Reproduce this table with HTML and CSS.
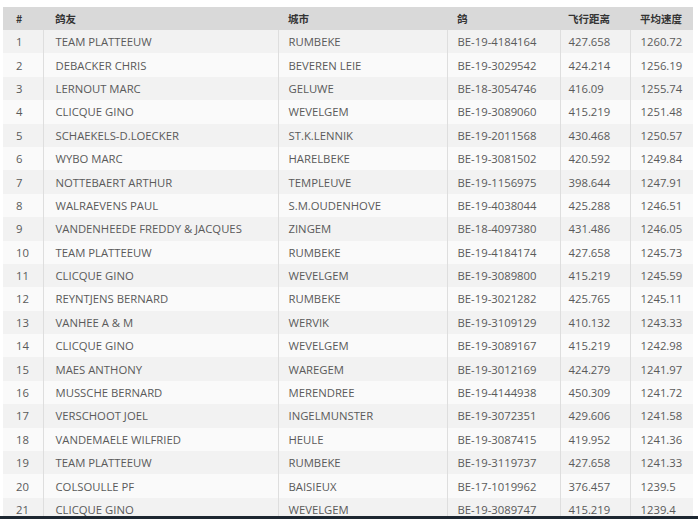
FILE: index.html
```html
<!DOCTYPE html>
<html>
<head>
<meta charset="utf-8">
<link rel="stylesheet" href="styles.css">
</head>
<body>
<div class="wrap">
<table class="rank">
<colgroup>
<col class="c-no"><col class="c-name"><col class="c-city"><col class="c-ring"><col class="c-dist"><col class="c-speed">
</colgroup>
<thead>
<tr><th>#</th><th>鸽友</th><th>城市</th><th>鸽</th><th>飞行距离</th><th>平均速度</th></tr>
</thead>
<tbody>
<tr><td>1</td><td>TEAM PLATTEEUW</td><td>RUMBEKE</td><td>BE-19-4184164</td><td>427.658</td><td>1260.72</td></tr>
<tr><td>2</td><td>DEBACKER CHRIS</td><td>BEVEREN LEIE</td><td>BE-19-3029542</td><td>424.214</td><td>1256.19</td></tr>
<tr><td>3</td><td>LERNOUT MARC</td><td>GELUWE</td><td>BE-18-3054746</td><td>416.09</td><td>1255.74</td></tr>
<tr><td>4</td><td>CLICQUE GINO</td><td>WEVELGEM</td><td>BE-19-3089060</td><td>415.219</td><td>1251.48</td></tr>
<tr><td>5</td><td>SCHAEKELS-D.LOECKER</td><td>ST.K.LENNIK</td><td>BE-19-2011568</td><td>430.468</td><td>1250.57</td></tr>
<tr><td>6</td><td>WYBO MARC</td><td>HARELBEKE</td><td>BE-19-3081502</td><td>420.592</td><td>1249.84</td></tr>
<tr><td>7</td><td>NOTTEBAERT ARTHUR</td><td>TEMPLEUVE</td><td>BE-19-1156975</td><td>398.644</td><td>1247.91</td></tr>
<tr><td>8</td><td>WALRAEVENS PAUL</td><td>S.M.OUDENHOVE</td><td>BE-19-4038044</td><td>425.288</td><td>1246.51</td></tr>
<tr><td>9</td><td>VANDENHEEDE FREDDY &amp; JACQUES</td><td>ZINGEM</td><td>BE-18-4097380</td><td>431.486</td><td>1246.05</td></tr>
<tr><td>10</td><td>TEAM PLATTEEUW</td><td>RUMBEKE</td><td>BE-19-4184174</td><td>427.658</td><td>1245.73</td></tr>
<tr><td>11</td><td>CLICQUE GINO</td><td>WEVELGEM</td><td>BE-19-3089800</td><td>415.219</td><td>1245.59</td></tr>
<tr><td>12</td><td>REYNTJENS BERNARD</td><td>RUMBEKE</td><td>BE-19-3021282</td><td>425.765</td><td>1245.11</td></tr>
<tr><td>13</td><td>VANHEE A &amp; M</td><td>WERVIK</td><td>BE-19-3109129</td><td>410.132</td><td>1243.33</td></tr>
<tr><td>14</td><td>CLICQUE GINO</td><td>WEVELGEM</td><td>BE-19-3089167</td><td>415.219</td><td>1242.98</td></tr>
<tr><td>15</td><td>MAES ANTHONY</td><td>WAREGEM</td><td>BE-19-3012169</td><td>424.279</td><td>1241.97</td></tr>
<tr><td>16</td><td>MUSSCHE BERNARD</td><td>MERENDREE</td><td>BE-19-4144938</td><td>450.309</td><td>1241.72</td></tr>
<tr><td>17</td><td>VERSCHOOT JOEL</td><td>INGELMUNSTER</td><td>BE-19-3072351</td><td>429.606</td><td>1241.58</td></tr>
<tr><td>18</td><td>VANDEMAELE WILFRIED</td><td>HEULE</td><td>BE-19-3087415</td><td>419.952</td><td>1241.36</td></tr>
<tr><td>19</td><td>TEAM PLATTEEUW</td><td>RUMBEKE</td><td>BE-19-3119737</td><td>427.658</td><td>1241.33</td></tr>
<tr><td>20</td><td>COLSOULLE PF</td><td>BAISIEUX</td><td>BE-17-1019962</td><td>376.457</td><td>1239.5</td></tr>
<tr><td>21</td><td>CLICQUE GINO</td><td>WEVELGEM</td><td>BE-19-3089747</td><td>415.219</td><td>1239.4</td></tr>
</tbody>
</table>
</div>
<div class="bottom-bar"></div>
</body>
</html>
```

FILE: styles.css
```css
html, body {
  margin: 0;
  padding: 0;
  background: #ffffff;
  overflow: hidden;
}
.wrap {
  padding: 7px 5px 0 3px;
}
.rank {
  width: 690px;
  border-collapse: collapse;
  table-layout: fixed;
  font-family: "Open Sans", "Noto Sans CJK SC", sans-serif;
  font-size: 11.3px;
  color: #5a5a5a;
}
.c-no { width: 40px; }
.c-name { width: 235px; }
.c-city { width: 169px; }
.c-ring { width: 113px; }
.c-dist { width: 70px; }
.c-speed { width: 63px; }
.rank th {
  background: #d9d9d9;
  color: #333333;
  font-family: "Noto Sans CJK SC", sans-serif;
  font-weight: 700;
  font-size: 10.5px;
  text-align: left;
  height: 23px;
  padding: 0 0 0 10px;
  line-height: 15px;
  white-space: nowrap;
}
.rank th:first-child { padding-left: 13px; }
.rank th:nth-child(2) { padding-left: 12px; }
.rank th:nth-child(5) { padding-left: 8px; }
.rank td {
  height: 23.4px;
  padding: 0 0 0 10px;
  line-height: 15px;
  white-space: nowrap;
  border-left: 1px solid #dedede;
}
.rank td:first-child {
  border-left: none;
  padding-left: 13px;
}
.rank td:nth-child(2) { padding-left: 12px; }
.rank td:nth-child(5) { padding-left: 8px; }
.rank tbody tr:nth-child(odd) { background: #f2f2f2; }
.rank tbody tr:nth-child(even) { background: #fafafa; }
.bottom-bar {
  position: absolute;
  left: 0;
  bottom: 0;
  width: 100%;
  height: 3px;
  background: #1d2731;
}
```
